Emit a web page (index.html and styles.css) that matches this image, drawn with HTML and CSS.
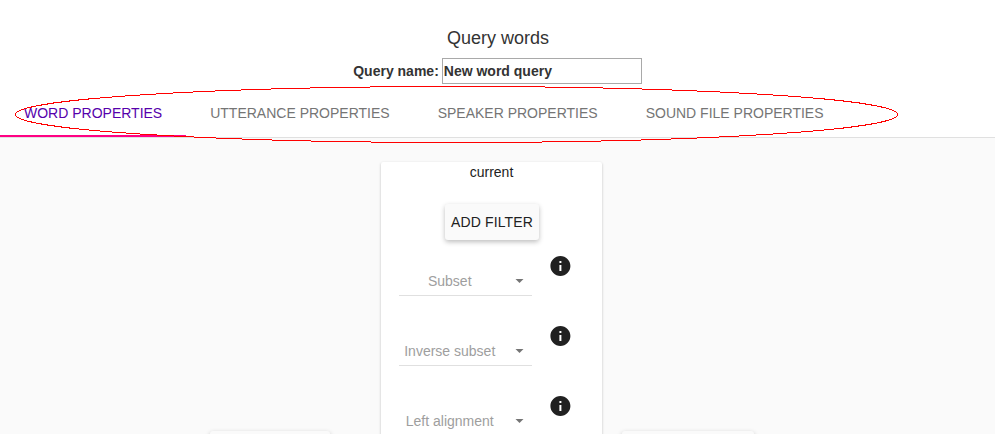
FILE: index.html
```html
<!DOCTYPE html>
<html lang="en">
<head>
<meta charset="utf-8">
<title>Query words</title>
<link rel="stylesheet" href="styles.css">
</head>
<body>
<header class="query-header">
  <h1 class="title">Query words</h1>
  <div class="query-name">
    <label for="query-name">Query name:</label>
    <input id="query-name" class="name-input" type="text" value="New word query">
  </div>
</header>
<nav class="tabs">
  <a class="tab tab-active">WORD PROPERTIES</a>
  <a class="tab">UTTERANCE PROPERTIES</a>
  <a class="tab">SPEAKER PROPERTIES</a>
  <a class="tab">SOUND FILE PROPERTIES</a>
</nav>
<svg class="annotation" viewBox="0 0 996 434"><ellipse cx="456.5" cy="114.5" rx="441" ry="28"/></svg>
<main class="content">
  <div class="side-button side-left"></div>
  <section class="card">
    <div class="card-title">current</div>
    <button class="add-filter">ADD FILTER</button>
    <div class="filter-row">
      <div class="select"><span class="select-label">Subset</span><svg class="arrow" viewBox="0 0 18 18"><path d="M4.500 7h8l-4 4z"/></svg></div>
      <svg class="info" viewBox="0 0 24 24"><path d="M12 2C6.480 2 2 6.480 2 12s4.480 10 10 10 10-4.480 10-10S17.520 2 12 2zm1 15h-2v-6h2v6zm0-8h-2V7h2v2z"/></svg>
    </div>
    <div class="filter-row">
      <div class="select"><span class="select-label">Inverse subset</span><svg class="arrow" viewBox="0 0 18 18"><path d="M4.500 7h8l-4 4z"/></svg></div>
      <svg class="info" viewBox="0 0 24 24"><path d="M12 2C6.480 2 2 6.480 2 12s4.480 10 10 10 10-4.480 10-10S17.520 2 12 2zm1 15h-2v-6h2v6zm0-8h-2V7h2v2z"/></svg>
    </div>
    <div class="filter-row">
      <div class="select"><span class="select-label">Left alignment</span><svg class="arrow" viewBox="0 0 18 18"><path d="M4.500 7h8l-4 4z"/></svg></div>
      <svg class="info" viewBox="0 0 24 24"><path d="M12 2C6.480 2 2 6.480 2 12s4.480 10 10 10 10-4.480 10-10S17.520 2 12 2zm1 15h-2v-6h2v6zm0-8h-2V7h2v2z"/></svg>
    </div>
  </section>
  <div class="side-button side-right"></div>
</main>
</body>
</html>
```

FILE: styles.css
```css
* {
  box-sizing: border-box;
}

body {
  margin: 0;
  width: 995px;
  height: 434px;
  overflow: hidden;
  background: #fff;
  color: #333;
  font: 14px/20px "Liberation Sans", Arial, sans-serif;
}

.query-header {
  height: 89px;
  padding-top: 28px;
}

.title {
  margin: 0 0 10px;
  padding-left: 1px;
  font-size: 18px;
  font-weight: 400;
  line-height: 20px;
  text-align: center;
}

.query-name {
  display: flex;
  align-items: center;
  justify-content: center;
  gap: 3px;
  font-weight: 700;
}

.name-input {
  width: 200px;
  height: 26px;
  padding: 1px;
  border: 1px solid #a9a9a9;
  background: #fff;
  color: #333;
  font: inherit;
}

.tabs {
  display: flex;
  height: 49px;
  border-bottom: 1px solid #e0e0e0;
}

.tab {
  height: 48px;
  padding: 0 24px;
  color: #757575;
  line-height: 48px;
  white-space: nowrap;
}

.tab-active {
  color: #5600ac;
  box-shadow: inset 0 -2px #ff0084;
}

.annotation {
  position: absolute;
  top: 0;
  left: 0;
  width: 996px;
  height: 434px;
  fill: none;
  stroke: #f00;
  stroke-width: 1;
  shape-rendering: crispEdges;
  pointer-events: none;
}

.content {
  display: flex;
  align-items: flex-start;
  height: 296px;
  padding: 24px 0 0 210px;
  overflow: hidden;
  background: #fafafa;
}

.card {
  width: 221px;
  height: 400px;
  margin: 0 20px 0 51px;
  border-radius: 2px;
  background: #fff;
  box-shadow: 0 1px 3px rgba(0, 0, 0, .2), 0 1px 1px rgba(0, 0, 0, .14);
  color: #212121;
}

.card-title {
  height: 42px;
  text-align: center;
}

.add-filter {
  display: block;
  width: 94px;
  height: 36px;
  margin: 0 0 14px 64px;
  padding: 0;
  border: 0;
  border-radius: 3px;
  background: #fafafa;
  box-shadow: 0 2px 5px rgba(0, 0, 0, .26);
  color: #212121;
  font: inherit;
  letter-spacing: .14px;
}

.filter-row {
  display: flex;
  height: 70px;
  padding-left: 18px;
}

.select {
  display: flex;
  align-items: center;
  width: 133px;
  height: 30px;
  margin: 12px 16px 0 0;
  border-bottom: 1px solid #e0e0e0;
  color: #9e9e9e;
}

.select-label {
  width: 101.5px;
  text-align: center;
}

.arrow {
  width: 18px;
  height: 18px;
  margin-left: 10.5px;
  fill: #757575;
}

.info {
  width: 24px;
  height: 24px;
  fill: #212121;
}

.info path {
  transform: translateX(.4px);
}

.side-button {
  width: 120px;
  height: 36px;
  margin-top: 269px;
  border-radius: 3px;
  background: #fafafa;
  box-shadow: 0 2px 5px rgba(0, 0, 0, .26);
}

.side-right {
  width: 132px;
}
```
